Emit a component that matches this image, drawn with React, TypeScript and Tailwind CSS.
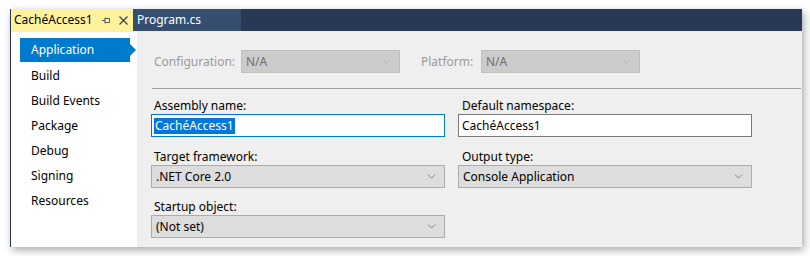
import { ChevronDown } from "lucide-react";

const navItems = ["Application", "Build", "Build Events", "Package", "Debug", "Signing", "Resources"];

function Combo({ value, disabled, className }: { value: string; disabled?: boolean; className: string }) {
  return (
    <div
      className={`flex items-center justify-between border pl-[4px] pr-[6px] ${
        disabled ? "bg-[#cccccc] border-[#bfbfbf] text-[#6d6d6d]" : "bg-[#dddddd] border-[#acacac] text-black"
      } ${className}`}
    >
      <span>{value}</span>
      <ChevronDown size={13} strokeWidth={1.2} className={disabled ? "text-[#a8a8a8]" : "text-[#555]"} />
    </div>
  );
}

export default function App() {
  return (
    <div
      className="w-[810px] h-[256px] bg-white pl-[10px] pt-[9px] text-[12px] leading-none"
      style={{ fontFamily: '"Segoe UI", "Noto Sans", sans-serif' }}
    >
      <div className="w-[792px] h-[238px] flex flex-col shadow-[2px_3px_8px_rgba(0,0,0,0.35)] border-l border-[#293955]">
        {/* tab strip */}
        <div className="h-[22px] bg-[#293955] flex">
          <div className="w-[122px] bg-[#fff29d] flex items-center pl-[3px] text-black">
            <span>CachéAccess1</span>
            <span className="ml-[8px] text-[#444]">
              <svg width="10" height="10" viewBox="0 0 10 10" fill="none" stroke="#555" strokeWidth="1">
                <path d="M1 5.5h3M4 2.5v6M4 3.5h4.5v4H4" />
              </svg>
            </span>
            <span className="ml-[8px]">
              <svg width="9" height="9" viewBox="0 0 9 9" stroke="#444" strokeWidth="1.3">
                <path d="M0.5 0.5l8 8M8.5 0.5l-8 8" />
              </svg>
            </span>
          </div>
          <div className="w-[108px] bg-[#364e6f] flex items-center pl-[4px] text-white">Program.cs</div>
        </div>
        <div className="h-[1px] bg-[#fff29d]" />

        <div className="flex flex-1">
          {/* nav */}
          <div className="w-[126px] bg-white pt-[6px] pl-[9px]">
            {navItems.map((item, i) =>
              i === 0 ? (
                <div key={item} className="relative w-[110px] h-[24px] bg-[#007acc] text-white flex items-center pl-[11px] mb-[1px]">
                  {item}
                  <span className="absolute right-[-6px] top-[6px] w-0 h-0 border-y-[6px] border-y-transparent border-l-[6px] border-l-[#007acc]" />
                </div>
              ) : (
                <div key={item} className="h-[25px] flex items-center pl-[11px] text-black">
                  {item}
                </div>
              )
            )}
          </div>

          {/* content */}
          <div className="flex-1 bg-[#efefef] pl-[14px] pr-[1px] pt-[18px]">
            <div className="flex items-center pl-[3px]">
              <span className="w-[87px] text-[#9a9a9a]">Configuration:</span>
              <Combo value="N/A" disabled className="w-[159px] h-[23px]" />
              <span className="ml-[21px] w-[60px] text-[#9a9a9a]">Platform:</span>
              <Combo value="N/A" disabled className="w-[159px] h-[23px]" />
            </div>

            <div className="h-[1px] bg-[#a0a0a0] mt-[15px] ml-[1px]" />

            <div className="grid grid-cols-[294px_294px] gap-x-[13px] mt-[9px]">
              <div className="flex flex-col">
                <span className="h-[16px] pl-[3px] flex items-center">Assembly name:</span>
                <div className="h-[23px] bg-white border border-[#0078d7] flex items-center pl-[2px]">
                  <span className="bg-[#0078d7] text-white px-[1px] py-[2px]">CachéAccess1</span>
                </div>
              </div>
              <div className="flex flex-col">
                <span className="h-[16px] pl-[4px] flex items-center">Default namespace:</span>
                <div className="h-[23px] bg-white border border-[#7a7a7a] flex items-center pl-[3px]">CachéAccess1</div>
              </div>

              <div className="flex flex-col mt-[11px]">
                <span className="h-[17px] pl-[3px] flex items-center">Target framework:</span>
                <Combo value=".NET Core 2.0" className="h-[23px]" />
              </div>
              <div className="flex flex-col mt-[11px]">
                <span className="h-[17px] pl-[4px] flex items-center">Output type:</span>
                <Combo value="Console Application" className="h-[23px]" />
              </div>

              <div className="flex flex-col mt-[10px]">
                <span className="h-[17px] pl-[3px] flex items-center">Startup object:</span>
                <Combo value="(Not set)" className="h-[23px]" />
              </div>
            </div>
          </div>
        </div>
      </div>
    </div>
  );
}
